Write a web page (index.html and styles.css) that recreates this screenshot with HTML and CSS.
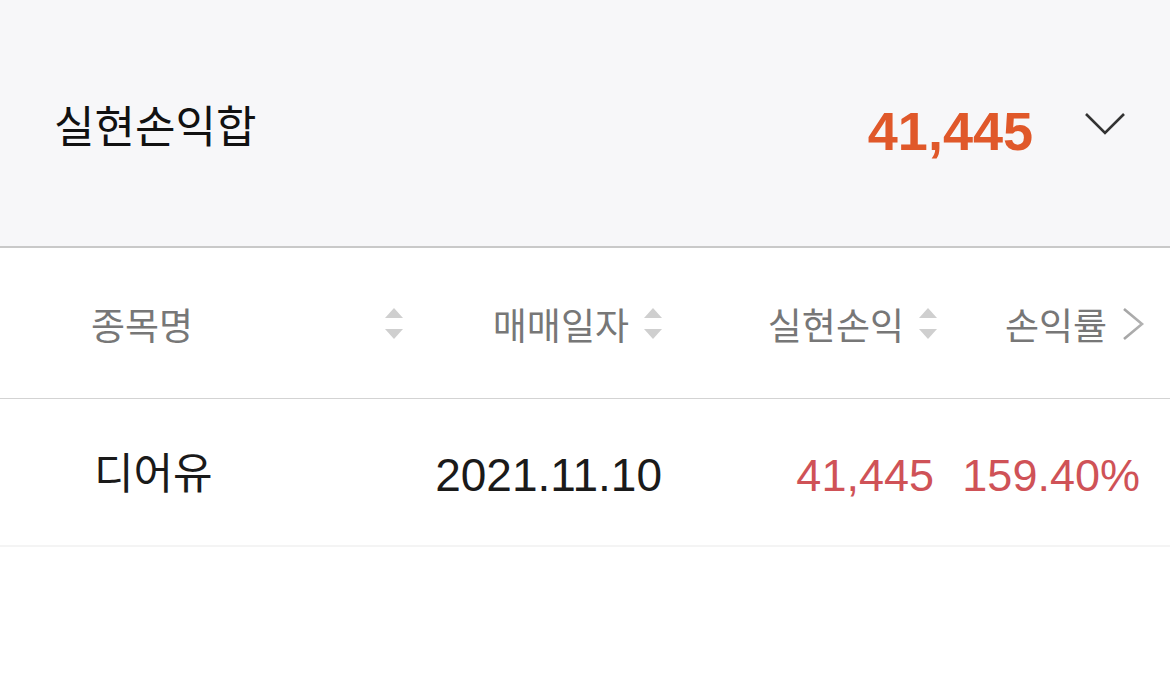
FILE: index.html
```html
<!DOCTYPE html>
<html lang="ko">
<head>
<meta charset="utf-8">
<link rel="stylesheet" href="styles.css">
</head>
<body>
<div class="page">
  <div class="summary">
    <div class="summary-label">실현손익합</div>
    <div class="summary-right">
      <span class="summary-value">41,445</span>
      <svg class="chev-down" width="42" height="26" viewBox="0 0 42 26"><path d="M2 3 L21 22 L40 3" fill="none" stroke="#333" stroke-width="2.6"/></svg>
    </div>
  </div>
  <div class="table">
    <div class="thead">
      <div class="th th-name"><span>종목명</span>
        <svg class="sort" width="18" height="32" viewBox="0 0 18 32"><path d="M9 0 L18 10 L0 10 Z" fill="#cfcfcf"/><path d="M0 21 L18 21 L9 31 Z" fill="#cfcfcf"/></svg>
      </div>
      <div class="th th-right"><span>매매일자</span>
        <svg class="sort" width="18" height="32" viewBox="0 0 18 32"><path d="M9 0 L18 10 L0 10 Z" fill="#cfcfcf"/><path d="M0 21 L18 21 L9 31 Z" fill="#cfcfcf"/></svg>
      </div>
      <div class="th th-right"><span>실현손익</span>
        <svg class="sort" width="18" height="32" viewBox="0 0 18 32"><path d="M9 0 L18 10 L0 10 Z" fill="#cfcfcf"/><path d="M0 21 L18 21 L9 31 Z" fill="#cfcfcf"/></svg>
      </div>
      <div class="th th-last"><span>손익률</span>
        <svg class="chev-right" width="26" height="34" viewBox="0 0 26 34"><path d="M4 2 L22 17 L4 32" fill="none" stroke="#9a9a9a" stroke-width="2.6"/></svg>
        <div class="fade"></div>
      </div>
    </div>
    <div class="tr">
      <div class="td td-name">디어유</div>
      <div class="td td-date">2021.11.10</div>
      <div class="td td-num pos">41,445</div>
      <div class="td td-rate pos">159.40%</div>
    </div>
  </div>
</div>
</body>
</html>
```

FILE: styles.css
```css
* { box-sizing: border-box; }
html, body { margin: 0; padding: 0; background: #fff; }
body { font-family: "Noto Sans CJK KR", "Noto Sans", sans-serif; width: 1170px; height: 695px; overflow: hidden; }

.summary {
  height: 248px;
  background: #f7f7f9;
  border-bottom: 2px solid #c9c9c9;
  display: flex;
  align-items: center;
  justify-content: space-between;
  padding: 0 44px 0 54px;
}
.summary-label {
  font-size: 44px;
  line-height: 1;
  color: #111;
  margin-top: 2px;
}
.summary-right { display: flex; align-items: center; gap: 51px; }
.summary-value {
  font-family: "Liberation Sans", Arial, sans-serif;
  font-weight: bold;
  font-size: 54px;
  line-height: 1;
  color: #e0582a;
  margin-top: 16px;
}
.chev-down { display: block; margin-top: 2px; }

.thead {
  display: grid;
  grid-template-columns: 410px 255px 275px 230px;
  height: 151px;
  border-bottom: 1px solid #d3d3d3;
}
.th {
  display: flex;
  align-items: center;
  font-size: 37px;
  line-height: 1;
  color: #777;
  position: relative;
}
.th span { margin-top: 2px; }
.th-name { justify-content: space-between; padding: 0 7px 0 91px; }
.th-right { justify-content: flex-end; gap: 15px; padding-right: 3px; }
.th-last { padding-left: 65px; gap: 13px; }
.sort { display: block; margin-top: 2px; }
.chev-right { display: block; margin-top: 2px; }
.fade {
  position: absolute;
  right: 0; top: 0; bottom: 0;
  width: 60px;
  background: linear-gradient(to right, rgba(255,255,255,0), rgba(255,255,255,0.45));
}

.tr {
  display: grid;
  grid-template-columns: 410px 255px 275px 230px;
  height: 148px;
  border-bottom: 2px solid #f4f4f4;
  align-items: center;
}
.td { line-height: 1; }
.td-name { font-size: 43px; color: #1a1a1a; padding-left: 94px; margin-top: -4px; }
.td-date, .td-num, .td-rate {
  font-family: "Liberation Sans", Arial, sans-serif;
  font-size: 45px;
  text-align: right;
  margin-top: 6px;
}
.td-date { color: #1a1a1a; padding-right: 3px; font-size: 46px; }
.td-num { padding-right: 6px; }
.td-rate { padding-right: 30px; }
.pos { color: #cf5257; }
```
